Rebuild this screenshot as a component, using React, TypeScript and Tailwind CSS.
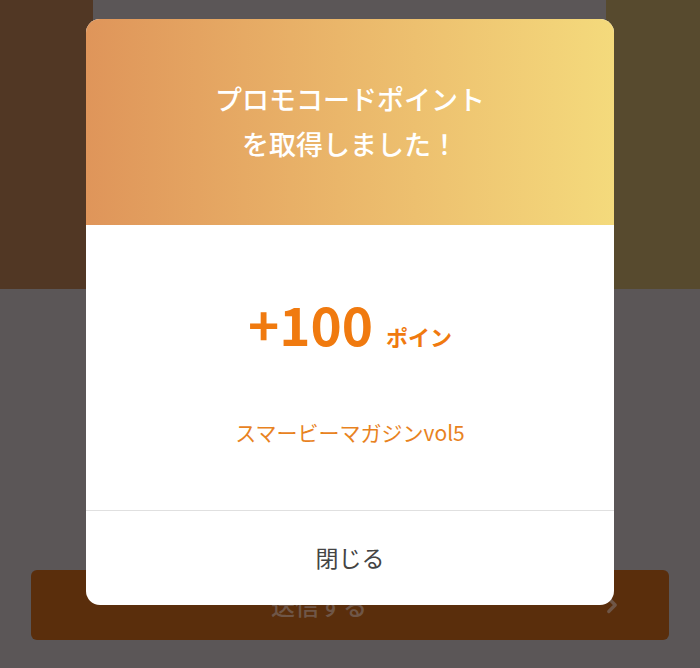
import { ChevronRight } from "lucide-react"

const font = { fontFamily: '"Noto Sans CJK JP", "Noto Sans", sans-serif' }

const App = () => {
  return (
    <div className="relative w-[700px] h-[668px] overflow-hidden bg-[#5b5657]" style={font}>
      {/* dimmed page behind */}
      <div className="flex h-full flex-col">
        <div className="flex h-[289px] justify-between">
          <div className="w-[93px] bg-[#513724]" />
          <div className="w-[94px] bg-[#574a2e]" />
        </div>
        <div className="flex-1" />
        <div className="px-[31px] pb-[28px]">
          <div className="relative flex h-[70px] items-center justify-center rounded-[6px] bg-[#5a2e0c] pr-[62px]">
            <span className="text-[24px] font-medium text-[#6f5647]">送信する</span>
            <ChevronRight className="absolute right-[44px] text-[#6f5647]" size={26} strokeWidth={3} />
          </div>
        </div>
      </div>

      {/* modal */}
      <div className="absolute left-[86px] top-[19px] flex h-[586px] w-[528px] flex-col overflow-hidden rounded-[14px] bg-white">
        <div className="flex h-[206px] flex-col items-center justify-center bg-gradient-to-r from-[#df955a] to-[#f4da7c] pb-[2px]">
          <p className="text-center text-[27px] font-medium leading-[45px] text-white">
            プロモコードポイント
            <br />
            を取得しました！
          </p>
        </div>
        <div className="flex h-[285px] flex-col items-center">
          <div className="mt-[72px] flex items-baseline gap-[13px] text-[#f07a0f]">
            <span className="text-[53px] font-bold leading-none">+100</span>
            <span className="text-[22px] font-bold">ポイン</span>
          </div>
          <p className="mt-[64px] text-[21px] text-[#e8831f]">スマービーマガジンvol5</p>
        </div>
        <div className="h-px bg-[#e0e0e0]" />
        <div className="flex flex-1 items-center justify-center pb-[2px]">
          <span className="text-[23px] text-[#444]">閉じる</span>
        </div>
      </div>
    </div>
  )
}

export default App
